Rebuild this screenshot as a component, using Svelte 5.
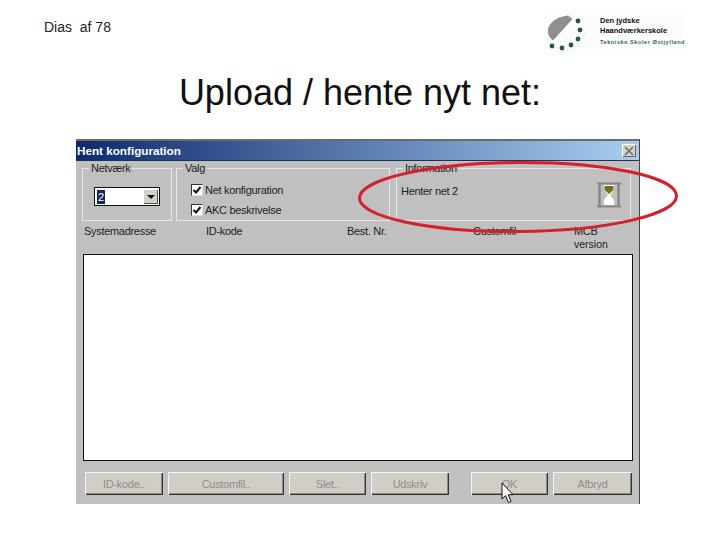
<script>
  const columns = [
    { label: 'Systemadresse', width: 122 },
    { label: 'ID-kode', width: 141 },
    { label: 'Best. Nr.', width: 126 },
    { label: 'Customfil', width: 101 },
    { label: 'MCB', sub: 'version', width: 60 }
  ];
  const buttonsLeft = [
    { label: 'ID-kode..', width: 78 },
    { label: 'Customfil..', width: 116 },
    { label: 'Slet..', width: 77 },
    { label: 'Udskriv', width: 78 }
  ];
  const buttonsRight = [
    { label: 'OK', width: 77 },
    { label: 'Afbryd', width: 79 }
  ];
  const checks = ['Net konfiguration', 'AKC beskrivelse'];
</script>

<div class="slide">
  <header class="top">
    <div class="page">Dias&nbsp;&nbsp;af 78</div>
    <div class="logo">
      <svg class="mark" viewBox="0 0 40 38" width="40" height="38" aria-hidden="true">
        <path d="M20 0.5 L24.5 4 L5 25.5 Q-1 21 0 14 Q3 3 20 0.5 Z" fill="#8f8f8f" />
        <path d="M37 18 Q32 34 10 37" fill="none" stroke="#c9d4d4" stroke-width="0.6" stroke-dasharray="1.5 1" />
        <circle cx="30" cy="6" r="2.4" fill="#24584f" />
        <circle cx="32" cy="15" r="2.4" fill="#24584f" />
        <circle cx="30" cy="24" r="2.4" fill="#24584f" />
        <circle cx="23" cy="30" r="2.4" fill="#24584f" />
        <circle cx="14" cy="33" r="2.4" fill="#24584f" />
        <circle cx="4" cy="31" r="2.4" fill="#24584f" />
      </svg>
      <div class="logo-text">
        <div class="school">Den jydske<br />Haandværkerskole</div>
        <div class="tag">Tekniske Skoler Østjylland</div>
      </div>
    </div>
  </header>

  <h1>Upload / hente nyt net:</h1>

  <section class="dialog">
    <div class="titlebar">
      <span>Hent konfiguration</span>
      <span class="close" aria-hidden="true">
        <svg viewBox="0 0 10 10" width="10" height="10">
          <path d="M1 1 L9 9 M9 1 L1 9" stroke="#666" stroke-width="1.4" />
        </svg>
      </span>
    </div>

    <div class="groups">
      <fieldset class="net">
        <legend>Netværk</legend>
        <div class="combo">
          <span class="value">2</span>
          <span class="arrow"></span>
        </div>
      </fieldset>
      <fieldset class="valg">
        <legend>Valg</legend>
        {#each checks as label}
          <div class="check">
            <span class="box">
              <svg viewBox="0 0 10 10" width="10" height="10" aria-hidden="true">
                <path d="M1.5 5 L4 7.5 L8.5 2" fill="none" stroke="#111" stroke-width="2" />
              </svg>
            </span>{label}
          </div>
        {/each}
      </fieldset>
      <fieldset class="info">
        <legend>Information</legend>
        <span class="status">Henter net 2</span>
        <svg class="glass" viewBox="0 0 26 26" width="26" height="26" aria-hidden="true">
          <path d="M1 1.5 H25 M1 24.5 H25" stroke="#858585" stroke-width="2" />
          <path d="M3.5 2 V24 M22.5 2 V24" stroke="#858585" stroke-width="2.4" />
          <path d="M8 3 H18 V8 L14 13 L18 18 V23 H8 V18 L12 13 L8 8 Z" fill="#fff" />
          <path d="M8.5 4 H17.5 V8 L13 12 L8.5 8 Z" fill="#77701a" />
        </svg>
      </fieldset>
    </div>

    <div class="columns">
      {#each columns as c}
        <div class="col" style="width:{c.width}px">{c.label}{#if c.sub}<br /><span class="sub">{c.sub}</span>{/if}</div>
      {/each}
    </div>

    <div class="list"></div>

    <div class="buttons">
      <div class="btn-group">
        {#each buttonsLeft as b}
          <div class="btn" style="width:{b.width}px">{b.label}</div>
        {/each}
      </div>
      <div class="btn-group">
        {#each buttonsRight as b}
          <div class="btn" style="width:{b.width}px">{b.label}</div>
        {/each}
      </div>
    </div>
  </section>

  <svg class="ring" viewBox="0 0 324 76" width="324" height="76" aria-hidden="true">
    <ellipse cx="162" cy="38" rx="158.5" ry="34.5" fill="none" stroke="#d3202c" stroke-width="3" transform="rotate(-0.4 162 38)" />
  </svg>

  <svg class="cursor" viewBox="0 0 13 22" width="13" height="22" aria-hidden="true">
    <path d="M1 1 V17 L4.6 13.6 L7.4 20.6 L10 19.4 L7.2 12.8 L12 12.6 Z" fill="#fff" stroke="#111" stroke-width="1" />
  </svg>
</div>

<style>
  :global(body) {
    margin: 0;
    background: #fff;
  }
  .slide {
    position: relative;
    width: 720px;
    height: 540px;
    overflow: hidden;
    background: #fff;
    font-family: "Liberation Sans", Arial, sans-serif;
    color: #222;
  }
  .top {
    display: flex;
    justify-content: space-between;
    align-items: flex-start;
    height: 74px;
    padding: 10px 34px 0 44px;
    box-sizing: border-box;
  }
  .page {
    margin-top: 9px;
    font-size: 14px;
    line-height: 16px;
  }
  .logo {
    display: flex;
    gap: 10px;
    width: 142px;
    height: 44px;
    background: #fbfcfb;
  }
  .mark {
    flex: none;
    margin: 5px 0 0 4px;
  }
  .logo-text {
    margin-left: 2px;
    padding-top: 6px;
    white-space: nowrap;
  }
  .school {
    font-size: 7.5px;
    line-height: 10px;
    font-weight: 700;
    color: #111;
  }
  .tag {
    margin-top: 3px;
    font-size: 5.6px;
    line-height: 7px;
    font-weight: 700;
    letter-spacing: 0.55px;
    color: #2f6a60;
  }
  h1 {
    margin: 0;
    height: 65px;
    font-size: 36px;
    line-height: 38px;
    font-weight: 400;
    text-align: center;
    color: #111;
  }
  .dialog {
    display: flex;
    flex-direction: column;
    width: 564px;
    height: 365px;
    margin-left: 76px;
    box-sizing: border-box;
    border-top: 2px solid #6b6b6b;
    border-right: 1px solid #444;
    background: #c0c0c0;
    font-size: 11px;
    letter-spacing: -0.3px;
  }
  .titlebar {
    display: flex;
    justify-content: space-between;
    align-items: center;
    flex: none;
    height: 20px;
    padding: 0 3px 0 1px;
    background: linear-gradient(90deg, #0e2a6e, #a8cdf0);
    border-bottom: 1px solid #20305a;
    box-sizing: border-box;
    color: #fff;
    font-weight: 700;
    font-size: 11.7px;
    letter-spacing: 0;
  }
  .close {
    display: flex;
    align-items: center;
    justify-content: center;
    width: 14px;
    height: 13px;
    background: #d4d0c8;
    box-shadow: inset 1px 1px 0 #fff, inset -1px -1px 0 #666;
  }
  .groups {
    display: flex;
    flex: none;
    gap: 4px;
    height: 60px;
    padding-left: 6px;
  }
  fieldset {
    position: relative;
    margin: 1px 0 0;
    height: 59px;
    box-sizing: border-box;
    padding: 0;
    border: 1px solid #e6e6e6;
    outline: none;
    min-width: 0;
  }
  legend {
    margin-left: 6px;
    padding: 0 2px;
    line-height: 12px;
    background: #c0c0c0;
  }
  .net { width: 90px; }
  .valg { width: 214px; margin-right: 2px; }
  .info { width: 235px; }
  .combo {
    display: flex;
    justify-content: space-between;
    align-items: center;
    width: 66px;
    height: 19px;
    margin: 13px 0 0 11px;
    box-sizing: border-box;
    border: 1px solid #111;
    background: #fff;
    padding: 0 1px 0 2px;
  }
  .value {
    padding: 0 1px;
    background: #14285a;
    color: #fff;
    line-height: 14px;
  }
  .arrow {
    position: relative;
    width: 15px;
    height: 15px;
    background: #d4d0c8;
    box-shadow: inset 1px 1px 0 #fff, inset -1px -1px 0 #555;
  }
  .arrow::after {
    content: "";
    position: absolute;
    left: 4px;
    top: 6px;
    border: 4px solid transparent;
    border-top-color: #111;
    border-bottom-width: 0;
  }
  .check:first-of-type {
    margin-top: 6px;
  }
  .check {
    display: flex;
    align-items: center;
    gap: 2px;
    height: 20px;
    padding-left: 14px;
  }
  .box {
    display: flex;
    align-items: center;
    justify-content: center;
    width: 12px;
    height: 12px;
    box-sizing: border-box;
    border: 1px solid #333;
    border-right-color: #ddd;
    border-bottom-color: #ddd;
    background: #fff;
  }
  .status {
    position: absolute;
    left: 4px;
    top: 10px;
    line-height: 14px;
  }
  .glass {
    position: absolute;
    right: 8px;
    top: 8px;
  }
  .columns {
    display: flex;
    flex: none;
    height: 33px;
    padding: 4px 0 0 8px;
    box-sizing: border-box;
    line-height: 13px;
  }
  .col { flex: none; }
  .sub { font-size: 10.5px; letter-spacing: 0; }
  .list {
    flex: none;
    width: 550px;
    height: 207px;
    margin-left: 7px;
    box-sizing: border-box;
    border: 1px solid #111;
    background: #fff;
  }
  .buttons {
    display: flex;
    justify-content: space-between;
    flex: none;
    margin-top: 11px;
    padding: 0 7px 0 9px;
  }
  .btn-group {
    display: flex;
    gap: 5px;
  }
  .btn {
    display: flex;
    align-items: center;
    justify-content: center;
    height: 23px;
    box-sizing: border-box;
    background: #d2cec6;
    box-shadow: inset 1px 1px 0 #f4f4f4, inset -1px -1px 0 #333, inset -2px -2px 0 #8a8a8a;
    color: #8d8d88;
  }
  .ring {
    position: absolute;
    left: 356px;
    top: 159px;
  }
  .cursor {
    position: absolute;
    left: 501px;
    top: 482px;
  }
</style>
